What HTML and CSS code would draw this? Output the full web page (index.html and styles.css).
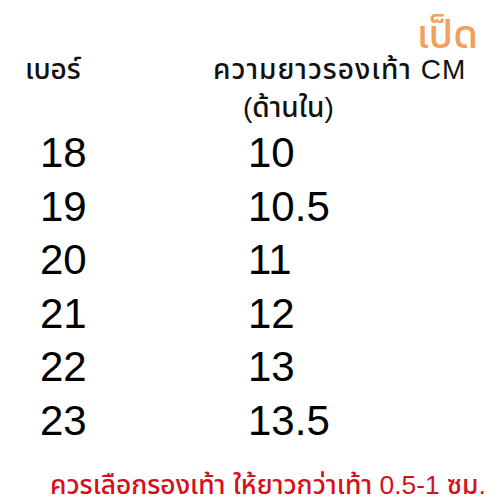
FILE: index.html
```html
<!DOCTYPE html>
<html lang="th">
<head>
<meta charset="utf-8">
<title>ตารางไซซ์รองเท้า</title>
<link rel="stylesheet" href="styles.css">
</head>
<body>
<main class="chart">
  <div class="brand">เป็ด</div>
  <div class="head">
    <div class="head-size">เบอร์</div>
    <div class="head-len">
      <div class="thai">ความยาวรองเท้า CM</div>
      <div class="inner">(ด้านใน)</div>
    </div>
  </div>
  <div class="rows">
    <div class="cell">18</div><div class="cell">10</div>
    <div class="cell">19</div><div class="cell">10.5</div>
    <div class="cell">20</div><div class="cell">11</div>
    <div class="cell">21</div><div class="cell">12</div>
    <div class="cell">22</div><div class="cell">13</div>
    <div class="cell">23</div><div class="cell">13.5</div>
  </div>
  <div class="note">ควรเลือกรองเท้า ให้ยาวกว่าเท้า 0.5-1 ซม.</div>
</main>
</body>
</html>
```
FILE: styles.css
```css
html, body {
  margin: 0;
  padding: 0;
  background: #ffffff;
}
body {
  width: 500px;
  height: 500px;
  overflow: hidden;
  font-family: "Liberation Sans", "Noto Sans Thai", "Noto Sans Thai UI", "Loma", "Garuda", "DejaVu Sans", sans-serif;
  color: #111111;
  font-weight: 500;
}
.chart {
  display: flex;
  flex-direction: column;
}
.brand {
  text-align: right;
  padding: 12px 22px 0 0;
  font-size: 40px;
  line-height: 44px;
  color: #f4a05a;
}
.head {
  display: grid;
  grid-template-columns: 188px auto;
  padding-left: 25px;
  margin-top: -4px;
  font-size: 28px;
  line-height: 36px;
}
.thai {
  letter-spacing: 1px;
}
.inner {
  padding-left: 30px;
  margin-top: 2px;
}
.rows {
  display: grid;
  grid-template-columns: 208px auto;
  padding-left: 40px;
  margin-top: 0;
  font-size: 42px;
  line-height: 53.6px;
  color: #000000;
  font-weight: 400;
}
.note {
  margin-top: 22px;
  padding-left: 50px;
  font-size: 26.4px;
  line-height: 30px;
  color: #d5101a;
}
```
